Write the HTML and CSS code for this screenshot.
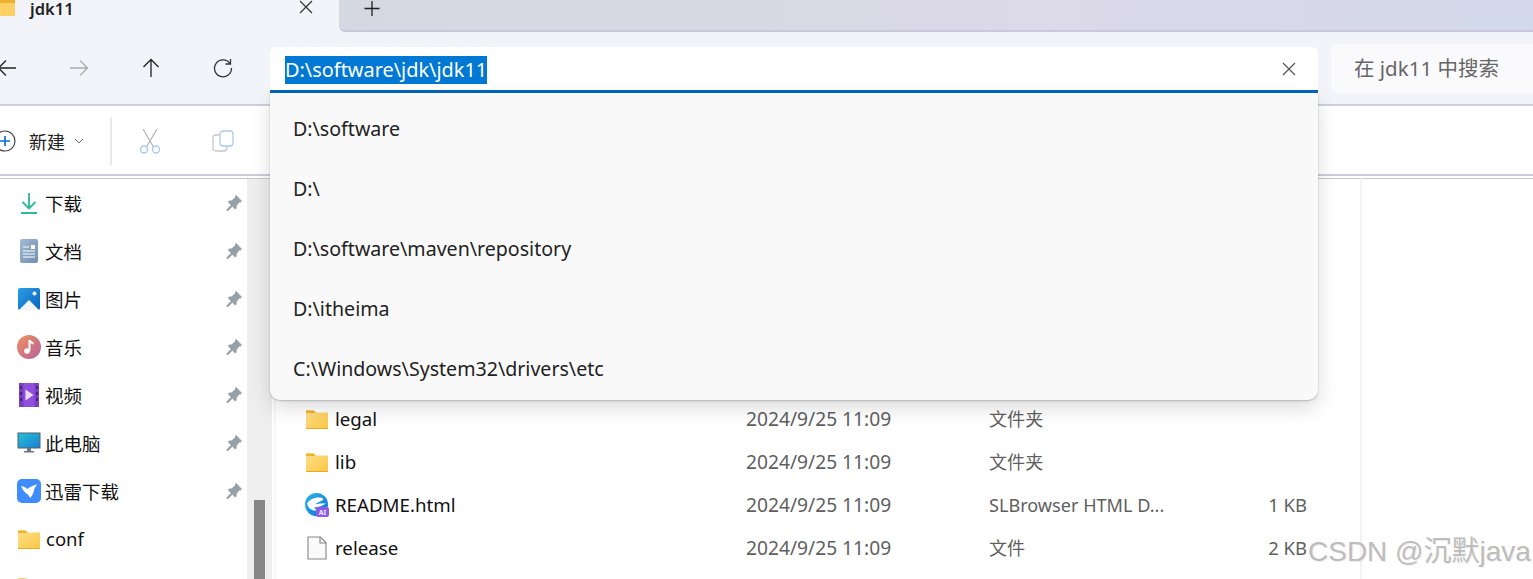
FILE: index.html
```html
<!DOCTYPE html>
<html lang="zh">
<head>
<meta charset="utf-8">
<title>jdk11</title>
<link rel="stylesheet" href="styles.css">
</head>
<body>
<div class="window">
  <header class="tabbar">
    <div class="tab">
      <svg class="tab-folder" width="20" height="16" viewBox="0 0 20 16"><path d="M0 0h20v16H0z" fill="#fcd062"/><path d="M0 0h20v3H0z" fill="#eeb02c"/></svg>
      <span class="tab-title">jdk11</span>
      <svg class="tab-close" width="16" height="16" viewBox="0 0 16 16"><path d="M2 1l12 12M14 1L2 13" stroke="#333" stroke-width="1.2" fill="none"/></svg>
    </div>
    <div class="strip">
      <svg width="18" height="18" viewBox="0 0 18 18"><path d="M9 1v15M1.500 8.500h15" stroke="#222" stroke-width="1.300" fill="none"/></svg>
    </div>
  </header>

  <nav class="navbar">
    <button class="nav-btn"><svg width="24" height="24" viewBox="0 0 24 24"><path d="M21 12H4M11 4.500L3.500 12l7.500 7.500" stroke="#222" stroke-width="1.300" fill="none"/></svg></button>
    <button class="nav-btn"><svg width="24" height="24" viewBox="0 0 24 24"><path d="M3 12h17M13 4.500l7.500 7.500-7.500 7.500" stroke="#aaa" stroke-width="1.300" fill="none"/></svg></button>
    <button class="nav-btn"><svg width="24" height="24" viewBox="0 0 24 24"><path d="M12 21V4M4.500 11L12 3.500l7.500 7.500" stroke="#222" stroke-width="1.300" fill="none"/></svg></button>
    <button class="nav-btn"><svg width="24" height="24" viewBox="0 0 24 24"><path d="M19 7.500A8.500 8.500 0 1 0 20.500 12M19.500 3v5h-5" stroke="#333" stroke-width="1.300" fill="none"/></svg></button>
    <div class="address">
      <div class="address-box">
        <span class="address-value">D:\software\jdk\jdk11</span>
        <svg class="address-clear" width="16" height="16" viewBox="0 0 16 16"><path d="M2 2l12 12M14 2L2 14" stroke="#555" stroke-width="1.200" fill="none"/></svg>
      </div>
      <ul class="suggest">
        <li>D:\software</li>
        <li>D:\</li>
        <li>D:\software\maven\repository</li>
        <li>D:\itheima</li>
        <li>C:\Windows\System32\drivers\etc</li>
      </ul>
    </div>
    <div class="search">在 jdk11 中搜索</div>
  </nav>

  <section class="cmdbar">
    <svg class="cmd-new" width="22" height="22" viewBox="0 0 22 22"><circle cx="11" cy="11" r="10" fill="#fff" stroke="#444" stroke-width="1.200"/><path d="M11 6v10M6 11h10" stroke="#0a6fd0" stroke-width="1.700"/></svg>
    <span class="cmd-label">新建</span>
    <svg class="cmd-chevron" width="10" height="6" viewBox="0 0 10 6"><path d="M1 1l4 4 4-4" stroke="#666" fill="none"/></svg>
    <span class="cmd-sep"></span>
    <svg class="cmd-cut" width="22" height="26" viewBox="0 0 22 26"><path d="M4 1l10.500 18M18 1L7.500 19" stroke="#b0b0b0" stroke-width="1.200" fill="none"/><circle cx="5" cy="21.500" r="3.500" fill="none" stroke="#a5cdf0" stroke-width="1.400"/><circle cx="17" cy="21.500" r="3.500" fill="none" stroke="#a5cdf0" stroke-width="1.400"/></svg>
    <svg class="cmd-copy" width="22" height="22" viewBox="0 0 22 22"><rect x="1" y="5" width="14" height="16" rx="3" fill="none" stroke="#c8c8c8" stroke-width="1.300"/><rect x="8" y="1" width="13" height="15" rx="3" fill="#fff" stroke="#a5cdf0" stroke-width="1.300"/></svg>
  </section>

  <main class="body">
    <aside class="sidebar">
      <div class="side-row">
        <svg class="side-icon" viewBox="0 0 24 24"><path d="M12 2v15M5.500 11l6.500 6.500 6.500-6.500M4 22h16" stroke="#29b99b" stroke-width="1.800" fill="none"/></svg>
        <span class="side-name">下载</span>
        <svg class="pin" viewBox="0 0 16 16"><use href="#pin"/></svg>
      </div>
      <div class="side-row">
        <svg class="side-icon" viewBox="0 0 24 24"><defs><linearGradient id="docg" x1="0" y1="0" x2="1" y2="1"><stop offset="0" stop-color="#a3bad4"/><stop offset="1" stop-color="#6f8fb0"/></linearGradient></defs><rect x="3" y="0" width="18" height="24" rx="2" fill="url(#docg)"/><path d="M6 8h6M6 12h12M6 15h12M6 18h12" stroke="#fff" stroke-width="1.200"/><rect x="14" y="6" width="4" height="4" fill="#fff"/></svg>
        <span class="side-name">文档</span>
        <svg class="pin" viewBox="0 0 16 16"><use href="#pin"/></svg>
      </div>
      <div class="side-row">
        <svg class="side-icon" viewBox="0 0 24 24"><defs><linearGradient id="picg" x1="0" y1="0" x2="1" y2="1"><stop offset="0" stop-color="#2a9fe8"/><stop offset="1" stop-color="#0a62bd"/></linearGradient></defs><rect x="1" y="1" width="22" height="22" rx="2" fill="url(#picg)"/><path d="M2 23l10-10 10 10z" fill="#f2f6fb"/><circle cx="17.500" cy="6.500" r="2" fill="#fff"/></svg>
        <span class="side-name">图片</span>
        <svg class="pin" viewBox="0 0 16 16"><use href="#pin"/></svg>
      </div>
      <div class="side-row">
        <svg class="side-icon" viewBox="0 0 24 24"><defs><linearGradient id="musg" x1="0" y1="0" x2="1" y2="1"><stop offset="0" stop-color="#f0925c"/><stop offset="1" stop-color="#b6609f"/></linearGradient></defs><circle cx="12" cy="12" r="12" fill="url(#musg)"/><path d="M12.500 5v10.500" stroke="#fff" stroke-width="2" fill="none"/><path d="M12.500 5.500c1 2 3 2.500 4 3" stroke="#fff" stroke-width="2" fill="none"/><circle cx="10" cy="16" r="2.800" fill="#fff"/></svg>
        <span class="side-name">音乐</span>
        <svg class="pin" viewBox="0 0 16 16"><use href="#pin"/></svg>
      </div>
      <div class="side-row">
        <svg class="side-icon" viewBox="0 0 24 24"><rect x="2" y="0" width="20" height="24" rx="2" fill="#8f4fdc"/><path d="M2 0h4.500v24H2zM17.500 0H22v24h-4.500z" fill="#7a3ec4"/><path d="M3 3h2v3H3zM3 9h2v3H3zM3 15h2v3H3zM19 3h2v3h-2zM19 9h2v3h-2zM19 15h2v3h-2z" fill="#43287a"/><path d="M8.500 6.500l8 5.500-8 5.500z" fill="#eadcfb"/></svg>
        <span class="side-name">视频</span>
        <svg class="pin" viewBox="0 0 16 16"><use href="#pin"/></svg>
      </div>
      <div class="side-row">
        <svg class="side-icon" viewBox="0 0 24 24"><defs><linearGradient id="pcg" x1="0" y1="0" x2="1" y2="1"><stop offset="0" stop-color="#26c0d8"/><stop offset="1" stop-color="#1a7fd0"/></linearGradient></defs><rect x="1" y="2" width="22" height="15" fill="url(#pcg)" stroke="#55606a"/><path d="M10 17h4v3h-4zM7 20h10v1.500H7z" fill="#6c757d"/></svg>
        <span class="side-name">此电脑</span>
        <svg class="pin" viewBox="0 0 16 16"><use href="#pin"/></svg>
      </div>
      <div class="side-row">
        <svg class="side-icon" viewBox="0 0 24 24"><rect width="24" height="24" rx="5" fill="#3f8cff"/><path d="M4 7c3 .5 5 1.500 6.500 3C13 8 15.500 6.500 20 5.500c-2 2.500-3 5-3.500 7.500-.5 2.500-2 4.500-3.500 6-.5-1.500-1.500-3-3-4C7.500 13.500 5.500 10.500 4 7z" fill="#fff"/></svg>
        <span class="side-name">迅雷下载</span>
        <svg class="pin" viewBox="0 0 16 16"><use href="#pin"/></svg>
      </div>
      <div class="side-row">
        <svg class="side-icon" viewBox="0 0 24 24"><use href="#folder"/></svg>
        <span class="side-name side-latin">conf</span>
      </div>
      <div class="side-row">
        <svg class="side-icon" viewBox="0 0 24 24"><use href="#folder"/></svg>
      </div>
    </aside>
    <div class="scrollbar"><div class="thumb"></div></div>
    <div class="files">
      <div class="file-row">
        <svg class="file-icon" viewBox="0 0 24 24"><use href="#folder"/></svg>
        <span class="f-name">legal</span><span class="f-date">2024/9/25 11:09</span><span class="f-type f-cjk">文件夹</span><span class="f-size"></span>
      </div>
      <div class="file-row">
        <svg class="file-icon" viewBox="0 0 24 24"><use href="#folder"/></svg>
        <span class="f-name">lib</span><span class="f-date">2024/9/25 11:09</span><span class="f-type f-cjk">文件夹</span><span class="f-size"></span>
      </div>
      <div class="file-row">
        <svg class="file-icon" viewBox="0 0 24 24"><defs><linearGradient id="edg" x1="0" y1="0" x2="1" y2="1"><stop offset="0" stop-color="#2bb8e8"/><stop offset="1" stop-color="#0b6fd6"/></linearGradient></defs><circle cx="11.500" cy="11.500" r="11.500" fill="url(#edg)"/><path d="M2 10.500C5 6 11 3.500 17 5c1 .3 1.500 1 1 2-2.500 1.500-5.500 2-8 4.500 3-1 6-1.200 11-1-3.500 2.500-7.500 3.500-12 4 1 1.500 2.500 2.500 5 3-4.500 1-10.500-.5-12-7z" fill="#fff"/><rect x="11" y="14" width="13" height="10" rx="2" fill="#8d5ae8"/><text class="ai-badge" x="17.500" y="22">AI</text></svg>
        <span class="f-name">README.html</span><span class="f-date">2024/9/25 11:09</span><span class="f-type">SLBrowser HTML D...</span><span class="f-size">1 KB</span>
      </div>
      <div class="file-row">
        <svg class="file-icon" viewBox="0 0 24 24"><path d="M3 1h12.500L21 6.500V23H3z" fill="#fafafa" stroke="#858585" stroke-width="1.100"/><path d="M15 1v6h6" fill="none" stroke="#858585" stroke-width="1.100"/></svg>
        <span class="f-name">release</span><span class="f-date">2024/9/25 11:09</span><span class="f-type f-cjk">文件</span><span class="f-size">2 KB</span>
      </div>
    </div>
    <div class="details"></div>
  </main>

  <div class="watermark">CSDN @沉默java</div>

  <svg class="sprites" width="0" height="0">
    <symbol id="pin" viewBox="0 0 16 16"><path d="M10 0L16 6 14.500 7.500 13.500 7.200 10.500 11 10.800 13 9.200 14.600 1.800 7 3.300 5.500 5.500 5.600 9 2.500 8.800 1.200z" fill="#96a0a8"/><path d="M6 10.500L1 15.500" stroke="#96a0a8" stroke-width="2.200"/></symbol>
    <symbol id="folder" viewBox="0 0 24 24"><defs><linearGradient id="fog" x1="0" y1="0" x2="1" y2="1"><stop offset="0" stop-color="#fde08c"/><stop offset="1" stop-color="#fbc742"/></linearGradient></defs><path d="M1 3.500h8l2 2h12V22H1z" fill="url(#fog)"/><path d="M1 3.500h7.500l2 2.500H1z" fill="#efb02a"/><path d="M1 21.500h22" stroke="#e9aa25"/></symbol>
  </svg>
</div>
</body>
</html>
```
FILE: styles.css
```css
* { box-sizing: border-box; }
html, body { margin: 0; padding: 0; background: #fff; }
body { font-family: "Noto Sans", "Noto Sans CJK SC", sans-serif; color: #1a1a1a; overflow: hidden; }
ul { list-style: none; margin: 0; padding: 0; }
button { border: 0; background: none; padding: 0; }

.window { position: relative; width: 1533px; height: 579px; overflow: hidden; display: flex; flex-direction: column; }
.sprites { position: absolute; }

/* tab strip */
.tabbar { height: 32px; display: flex; background: #f3f4f9; flex: none; }
.tab { width: 339px; display: flex; align-items: flex-start; flex: none; }
.tab-folder { margin-left: -5px; flex: none; }
.tab-title { margin-left: 15px; font-size: 16.500px; line-height: 18px; font-weight: 600; color: #222; }
.tab-close { margin-left: auto; margin-right: 25px; }
.strip { flex: 1; display: flex; align-items: flex-start; padding-left: 24px; background: linear-gradient(90deg, #d5d8e1 0%, #dcd9e8 60%, #d3d9eb 100%); border-bottom: 2px solid #c8c8da; border-bottom-left-radius: 6px; }

/* nav row */
.navbar { height: 74px; display: flex; align-items: flex-start; background: #f3f4f9; border-bottom: 2px solid #cfcfdc; flex: none; }
.nav-btn { width: 72px; height: 24px; margin-top: 24px; display: flex; justify-content: center; flex: none; }
.nav-btn:first-child { margin-left: -29px; }
.address { position: relative; width: 1048px; margin: 15px 0 0 11px; flex: none; }
.address-box { height: 46px; background: #fff; border-bottom: 3px solid #0067c0; border-radius: 6px 6px 0 0; display: flex; align-items: flex-start; justify-content: space-between; padding: 9px 21px 0 15px; }
.address-value { background: #0078d4; color: #fff; font-size: 19.900px; line-height: 28px; white-space: nowrap; }
.address-clear { margin-top: 5px; flex: none; }
.suggest { position: absolute; z-index: 5; left: 0; top: 46px; width: 100%; height: 307px; padding-top: 6px; background: #f9f9f9; border-radius: 0 0 10px 10px; box-shadow: 0 1px 2px rgba(0,0,0,.22), 0 8px 20px rgba(0,0,0,.14); }
.suggest li { height: 60px; line-height: 60px; padding-left: 23px; font-size: 19.600px; color: #222; white-space: nowrap; }
.search { flex: 1; height: 49px; margin: 12px 0 0 13px; padding-left: 23px; line-height: 49px; background: #fafafd; border-radius: 6px 0 0 6px; font-size: 20.500px; color: #666; white-space: nowrap; }

/* command bar */
.cmdbar { height: 70px; display: flex; align-items: center; padding-top: 2px; background: #fff; border-bottom: 2px solid #cbcbdb; flex: none; }
.cmd-new { margin-left: -6px; flex: none; }
.cmd-label { margin-left: 13px; font-size: 18px; color: #222; }
.cmd-chevron { margin-left: 9px; flex: none; }
.cmd-sep { width: 2px; height: 48px; margin-left: 26px; background: #e8e8ec; flex: none; }
.cmd-cut { margin-left: 27px; flex: none; }
.cmd-copy { margin-left: 51px; flex: none; }

/* main area */
.body { flex: 1; min-height: 0; display: flex; border-top: 2px solid #fff; }
.sidebar { width: 247px; flex: none; border-top: 1px solid #c8c8c8; }
.side-row { height: 48px; display: flex; align-items: center; padding: 0 0 0 17px; }
.side-icon { width: 24px; height: 24px; flex: none; }
.side-name { margin-left: 4px; font-size: 18.500px; color: #111; white-space: nowrap; }
.side-latin { margin-left: 5px; padding-bottom: 2px; }
.pin { width: 16px; height: 16px; margin-left: auto; margin-right: 5px; flex: none; }

.scrollbar { width: 25px; flex: none; background: #eeeeee; border-top: 1px solid #c8c8c8; padding: 321px 7px 0 7px; }
.thumb { height: 100px; background: #868686; }

.files { width: 1088px; flex: none; margin-left: 2px; padding-top: 218px; border-top: 1px solid #c8c8c8; border-left: 2px solid #f6f6f6; border-right: 2px solid #f3f3f3; }
.file-row { height: 43px; display: flex; align-items: center; padding-left: 29px; white-space: nowrap; }
.file-icon { width: 24px; height: 24px; flex: none; }
.ai-badge { font-family: "Noto Sans", sans-serif; font-size: 7px; font-weight: 700; fill: #f0e6ff; text-anchor: middle; }
.f-name { width: 411px; margin-left: 6px; font-size: 18.700px; color: #111; flex: none; }
.f-date { width: 243px; font-size: 19.200px; color: #5f5f5f; flex: none; }
.f-type { width: 229px; font-size: 18.100px; color: #5f5f5f; flex: none; }
.f-cjk { padding-bottom: 2px; }
.f-size { width: 89px; text-align: right; font-size: 18.500px; color: #5f5f5f; flex: none; }

.details { flex: 1; border-top: 1px solid #c8c8c8; }

.watermark { position: absolute; z-index: 6; left: 1308px; top: 536px; font-family: "Liberation Sans", "Noto Sans CJK SC", sans-serif; font-size: 28px; line-height: 32px; color: #bdbdbd; text-shadow: 1px 1px 1px rgba(0,0,0,.08); white-space: nowrap; }
```
